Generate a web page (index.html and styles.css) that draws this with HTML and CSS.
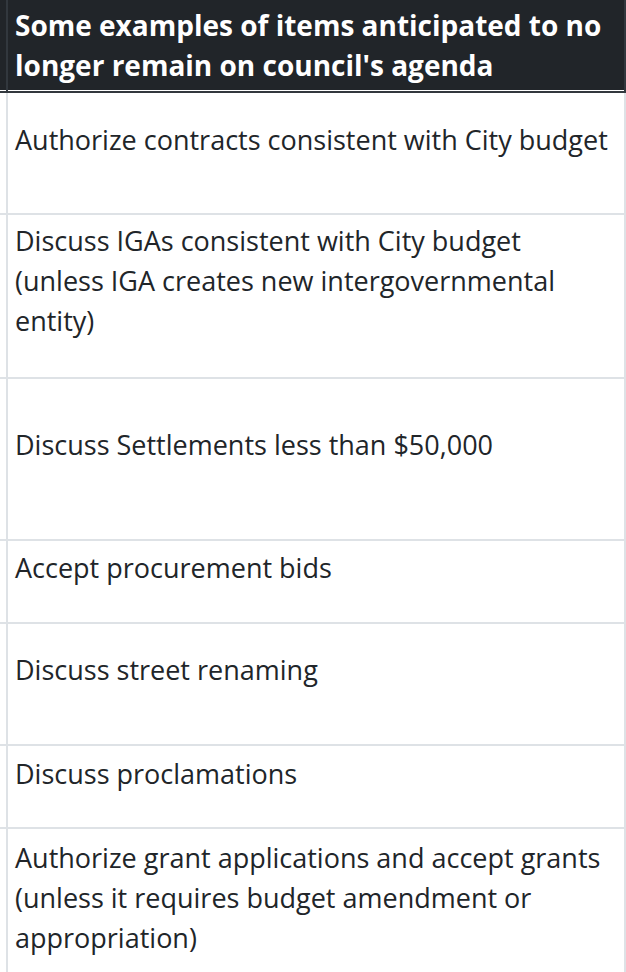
FILE: index.html
```html
<!DOCTYPE html>
<html lang="en">
<head>
<meta charset="utf-8">
<title>Council agenda items</title>
<link rel="stylesheet" href="styles.css">
</head>
<body>
<div class="table">
  <div class="row head">
    <div class="stub"></div>
    <div class="cell">Some examples of items anticipated to no longer remain on council's agenda</div>
  </div>
  <div class="row r1">
    <div class="stub"></div>
    <div class="cell">Authorize contracts consistent with City budget</div>
  </div>
  <div class="row r2">
    <div class="stub"></div>
    <div class="cell">Discuss IGAs consistent with City budget (unless IGA creates new intergovernmental entity)</div>
  </div>
  <div class="row r3">
    <div class="stub"></div>
    <div class="cell">Discuss Settlements less than $50,000</div>
  </div>
  <div class="row r4">
    <div class="stub"></div>
    <div class="cell">Accept procurement bids</div>
  </div>
  <div class="row r5">
    <div class="stub"></div>
    <div class="cell">Discuss street renaming</div>
  </div>
  <div class="row r6">
    <div class="stub"></div>
    <div class="cell">Discuss proclamations</div>
  </div>
  <div class="row r7">
    <div class="stub"></div>
    <div class="cell">Authorize grant applications and accept grants (unless it requires budget amendment or appropriation)</div>
  </div>
</div>
</body>
</html>
```
FILE: styles.css
```css
html, body {
  margin: 0;
  padding: 0;
  background: #ffffff;
}

body {
  font-family: "Open Sans", "Liberation Sans", sans-serif;
  font-size: 27px;
  line-height: 40px;
  color: #212529;
  width: 626px;
  height: 972px;
  overflow: hidden;
}

.table {
  display: flex;
  flex-direction: column;
  width: 626px;
}

.row {
  display: flex;
  border-bottom: 2px solid #dee2e6;
}

.stub {
  width: 6px;
  flex: none;
}

.cell {
  flex: 1;
  min-width: 0;
  border-left: 2px solid #dee2e6;
  border-right: 2px solid #dee2e6;
  padding-left: 7px;
  padding-right: 10px;
}

.head {
  background: #212529;
  color: #ffffff;
  font-weight: 700;
  font-size: 28px;
  border-bottom: 2px solid #32383e;
  box-shadow: inset 0 -1px 0 #ffffff;
}

.head .cell {
  border-left-color: #32383e;
  border-right-color: #32383e;
  padding-top: 5px;
  padding-bottom: 6px;
}

.r1 .cell { padding-top: 27px; padding-bottom: 53px; }
.r2 .cell { padding-top: 6px;  padding-bottom: 36px; }
.r3 .cell { padding-top: 46px; padding-bottom: 74px; }
.r4 .cell { padding-top: 7px;  padding-bottom: 34px; }
.r5 .cell { padding-top: 26px; padding-bottom: 54px; }
.r6 .cell { padding-top: 8px;  padding-bottom: 33px; }
.r7 .cell { padding-top: 9px;  padding-bottom: 19px; }
```
